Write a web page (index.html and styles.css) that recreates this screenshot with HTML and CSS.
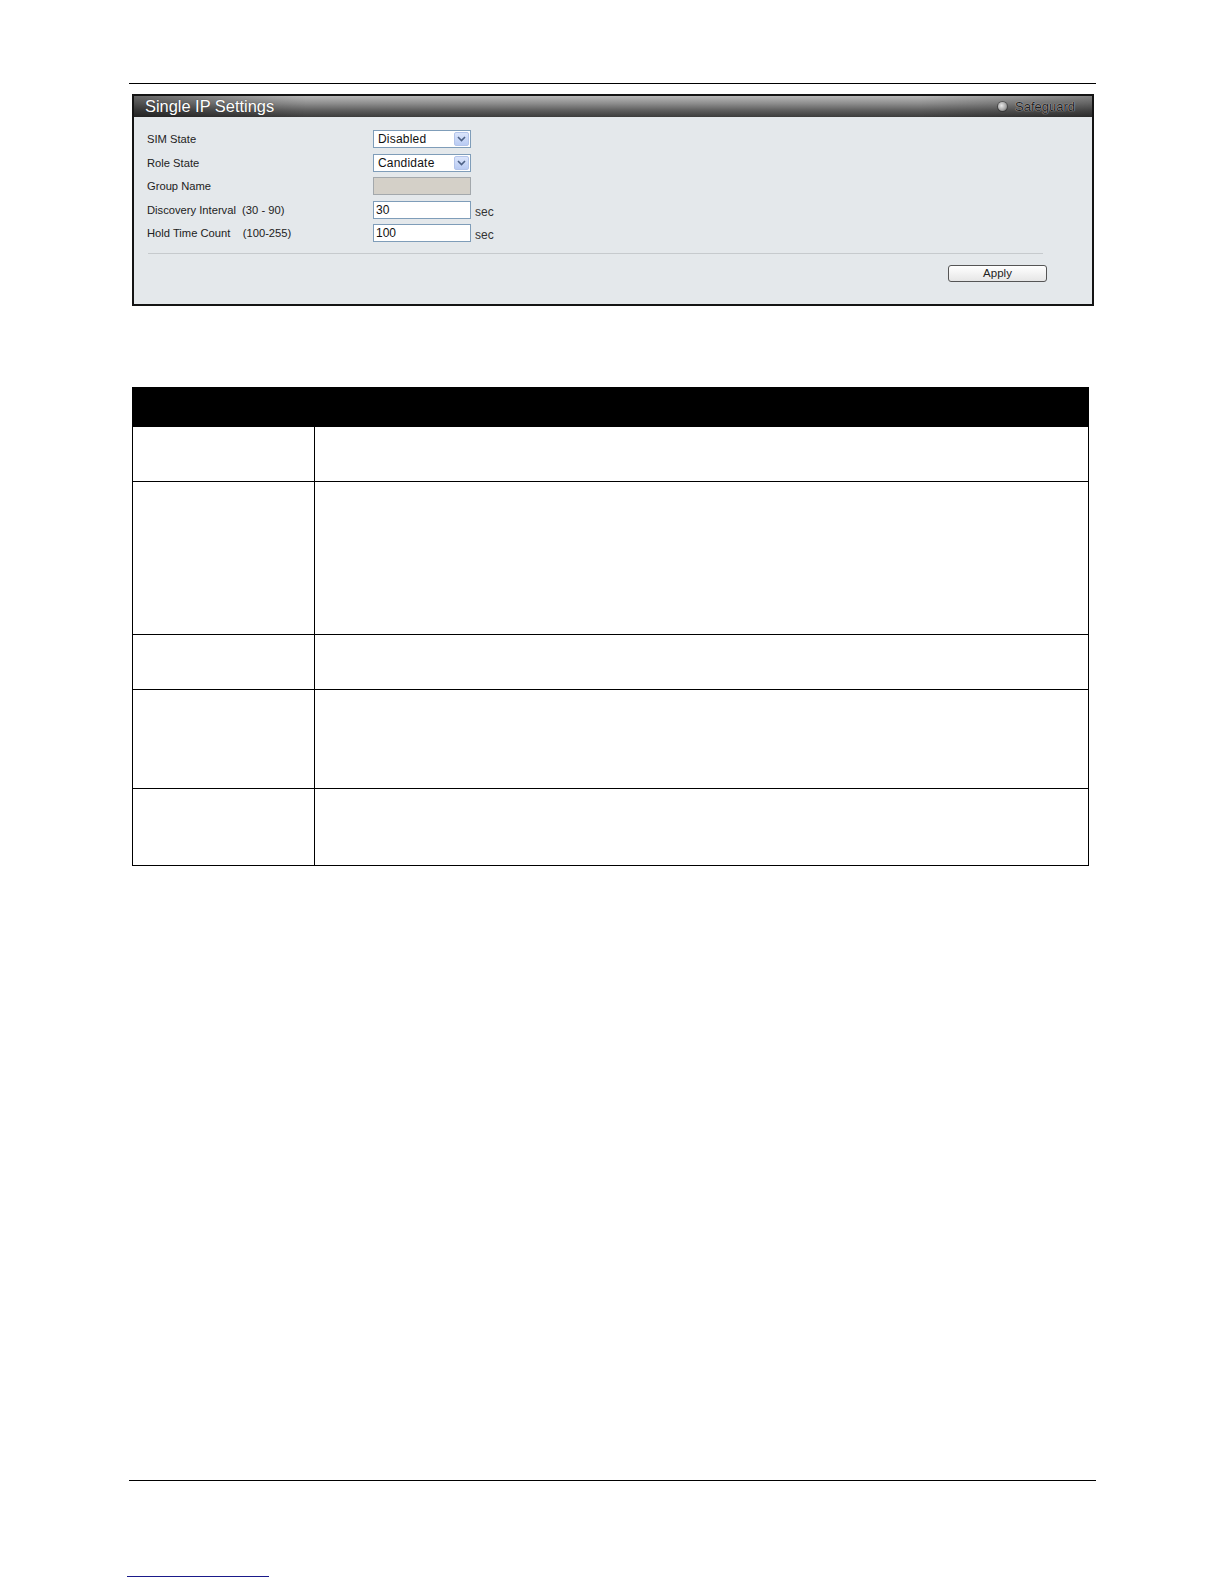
FILE: index.html
```html
<!DOCTYPE html>
<html>
<head>
<meta charset="utf-8">
<title>Single IP Settings</title>
<link rel="stylesheet" href="styles.css">
</head>
<body>
<div class="page">
  <div class="rule rule-top"></div>

  <div class="panel">
    <div class="panel-title">
      <span class="title-text">Single IP Settings</span>
      <span class="safeguard"><span class="sg-dot"></span><span class="sg-text">Safeguard</span></span>
    </div>
    <div class="panel-body">
      <div class="form-grid">
        <div class="label">SIM State</div>
        <div class="ctrl">
          <div class="select"><span class="sel-val">Disabled</span><span class="sel-btn"><svg width="9" height="6" viewBox="0 0 9 6"><path d="M1 1 L4.5 4.5 L8 1" fill="none" stroke="#4d6185" stroke-width="1.6"/></svg></span></div>
        </div>

        <div class="label">Role State</div>
        <div class="ctrl">
          <div class="select"><span class="sel-val">Candidate</span><span class="sel-btn"><svg width="9" height="6" viewBox="0 0 9 6"><path d="M1 1 L4.5 4.5 L8 1" fill="none" stroke="#4d6185" stroke-width="1.6"/></svg></span></div>
        </div>

        <div class="label">Group Name</div>
        <div class="ctrl"><div class="input disabled"></div></div>

        <div class="label">Discovery Interval&nbsp; (30 - 90)</div>
        <div class="ctrl"><div class="input">30</div><span class="unit">sec</span></div>

        <div class="label">Hold Time Count &nbsp;&nbsp; (100-255)</div>
        <div class="ctrl"><div class="input">100</div><span class="unit">sec</span></div>
      </div>
      <div class="separator"></div>
      <div class="actions"><div class="btn">Apply</div></div>
    </div>
  </div>

  <table class="desc">
    <thead>
      <tr class="head"><th class="c1"></th><th class="c2"></th></tr>
    </thead>
    <tbody>
      <tr class="r1"><td></td><td></td></tr>
      <tr class="r2"><td></td><td></td></tr>
      <tr class="r3"><td></td><td></td></tr>
      <tr class="r4"><td></td><td></td></tr>
      <tr class="r5"><td></td><td></td></tr>
    </tbody>
  </table>

  <div class="rule rule-bottom"></div>
  <div class="link-line"></div>
</div>
</body>
</html>
```

FILE: styles.css
```css
html, body {
  margin: 0;
  padding: 0;
  background: #ffffff;
}

.page {
  padding-top: 83px;
  font-family: "Liberation Sans", Arial, sans-serif;
  color: #222;
}

.rule {
  height: 1px;
  background: #000;
  margin-left: 129px;
  width: 967px;
}

.panel {
  margin-top: 10px;
  margin-left: 132px;
  width: 958px;
  border: 2px solid #141414;
  background: #e4e8eb;
}

.panel-title {
  height: 21px;
  display: flex;
  align-items: center;
  justify-content: space-between;
  padding: 0 17px 0 11px;
  background:
    linear-gradient(to right, rgba(0,0,0,0.45) 0%, rgba(0,0,0,0) 18%, rgba(0,0,0,0) 82%, rgba(0,0,0,0.3) 100%),
    linear-gradient(to bottom, #b8b8b8 0%, #8e8e8e 35%, #5c5c5c 70%, #3c3c3c 100%);
}

.title-text {
  color: #ffffff;
  font-size: 16.4px;
  line-height: 21px;
  text-shadow: 0 0 1px rgba(0,0,0,0.5);
}

.safeguard {
  display: flex;
  align-items: center;
  gap: 8px;
}

.sg-dot {
  width: 9px;
  height: 9px;
  border-radius: 50%;
  background: radial-gradient(circle at 40% 40%, #e8e8e8 0%, #a8a8a8 55%, #5a5a5a 100%);
  box-shadow: 0 0 0 1px rgba(40,40,40,0.5);
}

.sg-text {
  font-size: 13px;
  color: #1e1e1e;
  text-shadow: 0 0 1px rgba(200,200,200,1), 0 0 1px rgba(200,200,200,0.8);
}

.panel-body {
  padding: 13px 0 22px 0;
}

.form-grid {
  display: grid;
  grid-template-columns: 225px 1fr;
  grid-auto-rows: 18px;
  row-gap: 5.5px;
  padding-left: 13px;
}

.label {
  font-size: 11.2px;
  line-height: 18px;
  color: #222;
  white-space: pre;
}

.ctrl {
  display: flex;
  align-items: center;
  gap: 4px;
  margin-left: 1px;
}

.select {
  box-sizing: border-box;
  width: 98px;
  height: 18px;
  background: #fff;
  border: 1px solid #7f9db9;
  display: flex;
  align-items: center;
  justify-content: space-between;
  padding: 1px 1px 1px 4px;
}

.sel-val {
  font-size: 12px;
  line-height: 14px;
  color: #111;
  letter-spacing: 0.2px;
}

.sel-btn {
  box-sizing: border-box;
  width: 15px;
  height: 14px;
  background: linear-gradient(to bottom, #dbe5fb, #b9cbf3);
  border: 1px solid #b3c4ea;
  border-radius: 2px;
  display: flex;
  align-items: center;
  justify-content: center;
}

.input {
  box-sizing: border-box;
  width: 98px;
  height: 18px;
  background: #fff;
  border: 1px solid #7f9db9;
  font-size: 12px;
  line-height: 16px;
  padding-left: 2px;
  color: #111;
}

.input.disabled {
  background: #d4d0c8;
  border-color: #a3a8ac;
}

.unit {
  font-size: 12px;
  color: #333;
  padding-top: 4px;
}

.separator {
  margin: 11px 0 0 14px;
  width: 895px;
  height: 1px;
  background: #c6cacd;
}

.actions {
  display: flex;
  justify-content: flex-end;
  padding-right: 45px;
  margin-top: 11px;
}

.btn {
  box-sizing: border-box;
  width: 99px;
  height: 17px;
  border: 1px solid #555;
  border-radius: 3px;
  background: linear-gradient(to bottom, #ffffff, #e6e6e6);
  font-size: 11.5px;
  line-height: 15px;
  text-align: center;
  color: #222;
}

.desc {
  margin-top: 81px;
  margin-left: 132px;
  width: 957px;
  border-collapse: collapse;
  table-layout: fixed;
}

.desc th, .desc td {
  padding: 0;
  border: 1px solid #000;
}

.desc th.c1 {
  width: 181px;
}

.head th {
  background: #000;
  height: 38px;
}

.r1 td { height: 54px; }
.r2 td { height: 152px; }
.r3 td { height: 54px; }
.r4 td { height: 98px; }
.r5 td { height: 76px; }

.rule-bottom {
  margin-top: 614px;
}

.link-line {
  margin-top: 95px;
  margin-left: 127px;
  width: 142px;
  height: 1px;
  background: #1a1a8a;
}
```
